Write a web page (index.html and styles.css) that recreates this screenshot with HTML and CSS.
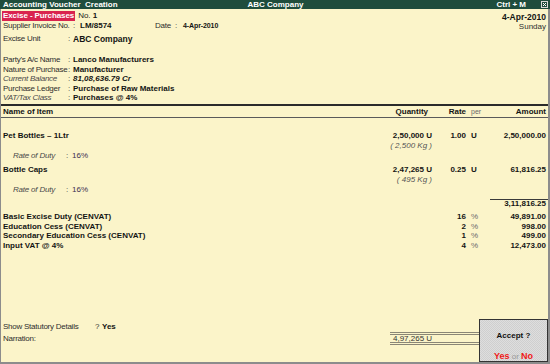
FILE: index.html
```html
<!DOCTYPE html>
<html>
<head>
<meta charset="utf-8">
<link rel="stylesheet" href="styles.css">
</head>
<body>
<div class="window">
  <div class="titlebar">
    <span class="tb-left">Accounting Voucher&nbsp; Creation</span>
    <span class="tb-center">ABC Company</span>
    <span class="tb-right">Ctrl + M<svg class="closebox" width="7" height="7" viewBox="0 0 7 7"><rect x="0.5" y="0.5" width="6" height="6" fill="none" stroke="#d8d8d8" stroke-width="1"/><path d="M2 2 L5 5 M5 2 L2 5" stroke="#ffffff" stroke-width="1"/></svg></span>
  </div>
  <div class="main">
    <div class="top">
      <div class="top-left">
        <div class="hrow r1"><span class="vtype">Excise - Purchases</span><span class="no">No. <b>1</b></span></div>
        <div class="hrow r2"><span class="lbl w70">Supplier Invoice No.</span><span class="colon c7">:</span><b class="v75">LM/8574</b><span class="lbl w20">Date</span><span class="colon c8">:</span><b class="smalldate">4-Apr-2010</b></div>
        <div class="hrow r3"><span class="lbl w64">Excise Unit</span><span class="colon">:</span><b class="big">ABC Company</b></div>
      </div>
      <div class="top-right">
        <b class="rdate">4-Apr-2010</b>
        <div class="day">Sunday</div>
      </div>
    </div>

    <div class="party">
      <div class="prow"><span class="lbl w64">Party's A/c Name</span><span class="colon">:</span><b>Lanco Manufacturers</b></div>
      <div class="prow"><span class="lbl w64">Nature of Purchase</span><span class="colon">:</span><b>Manufacturer</b></div>
      <div class="prow"><span class="lbl w64 it">Current Balance</span><span class="colon">:</span><b class="it">81,08,636.79 Cr</b></div>
      <div class="prow"><span class="lbl w64">Purchase Ledger</span><span class="colon">:</span><b>Purchase of Raw Materials</b></div>
      <div class="prow"><span class="lbl w64 it">VAT/Tax Class</span><span class="colon">:</span><b>Purchases @ 4%</b></div>
    </div>

    <div class="thead trow">
      <span class="c-name b">Name of Item</span>
      <span class="c-qty b hq">Quantity</span>
      <span class="c-rate b">Rate</span>
      <span class="c-per per-h">per</span>
      <span class="c-amt b">Amount</span>
    </div>

    <div class="item first">
      <div class="trow"><span class="c-name b">Pet Bottles – 1Ltr</span><span class="c-qty b">2,50,000 U</span><span class="c-rate b">1.00</span><span class="c-per b">U</span><span class="c-amt b">2,50,000.00</span></div>
      <div class="trow"><span class="c-name"></span><span class="c-qty alt">( 2,500 Kg )</span><span class="c-rate"></span><span class="c-per"></span><span class="c-amt"></span></div>
      <div class="trow"><span class="c-name duty"><i class="dl">Rate of Duty</i><span class="dc">:</span><span class="dv">16%</span></span></div>
    </div>
    <div class="item">
      <div class="trow"><span class="c-name b">Bottle Caps</span><span class="c-qty b">2,47,265 U</span><span class="c-rate b">0.25</span><span class="c-per b">U</span><span class="c-amt b">61,816.25</span></div>
      <div class="trow"><span class="c-name"></span><span class="c-qty alt">( 495 Kg )</span><span class="c-rate"></span><span class="c-per"></span><span class="c-amt"></span></div>
      <div class="trow"><span class="c-name duty"><i class="dl">Rate of Duty</i><span class="dc">:</span><span class="dv">16%</span></span></div>
    </div>

    <div class="trow subtotal"><span class="c-name"></span><span class="c-qty"></span><span class="c-rate"></span><span class="c-per"></span><span class="c-amt b">3,11,816.25</span></div>

    <div class="taxes">
      <div class="trow"><span class="c-name b">Basic Excise Duty (CENVAT)</span><span class="c-qty"></span><span class="c-rate b">16</span><span class="c-per pct">%</span><span class="c-amt b">49,891.00</span></div>
      <div class="trow"><span class="c-name b">Education Cess (CENVAT)</span><span class="c-qty"></span><span class="c-rate b">2</span><span class="c-per pct">%</span><span class="c-amt b">998.00</span></div>
      <div class="trow"><span class="c-name b">Secondary Education Cess (CENVAT)</span><span class="c-qty"></span><span class="c-rate b">1</span><span class="c-per pct">%</span><span class="c-amt b">499.00</span></div>
      <div class="trow"><span class="c-name b">Input VAT @ 4%</span><span class="c-qty"></span><span class="c-rate b">4</span><span class="c-per pct">%</span><span class="c-amt b">12,473.00</span></div>
    </div>

    <div class="footer">
      <div class="frow"><span class="lbl w92">Show Statutory Details</span><span class="q">?</span><b>Yes</b></div>
      <div class="frow narr"><span class="lbl w387">Narration:</span><span class="qtytotal">4,97,265 U</span></div>
    </div>
  </div>

  <div class="accept">
    <div class="acc-title">Accept ?</div>
    <div class="acc-yn"><span class="yn">Yes</span> <span class="or">or</span> <span class="yn">No</span></div>
  </div>
</div>
</body>
</html>
```

FILE: styles.css
```css
* { box-sizing: border-box; }

body {
  margin: 0;
  font-family: "Liberation Sans", Arial, sans-serif;
  font-size: 8px;
  color: #1c1c1c;
  background: #fbf4c9;
}

.window {
  position: relative;
  width: 550px;
  height: 364px;
  background: #fbf4c9;
  overflow: hidden;
  display: flex;
  flex-direction: column;
}

.titlebar {
  height: 9px;
  line-height: 9px;
  background: #1f4d3d;
  color: #ffffff;
  font-weight: bold;
  font-size: 8px;
  display: grid;
  grid-template-columns: 1fr auto 1fr;
  padding: 0 2px 0 3px;
  white-space: nowrap;
}

.tb-center { text-align: center; }

.tb-right {
  display: flex;
  justify-content: flex-end;
  align-items: center;
  gap: 15px;
}

.closebox { display: block; }

.main {
  flex: 1;
  display: flex;
  flex-direction: column;
  border-left: 1px solid #8c8c8c;
  border-right: 2px solid #8c8c8c;
  border-bottom: 2px solid #8c8c8c;
  padding: 2px 2px 17px 2px;
  white-space: nowrap;
}

b, .b { font-weight: bold; color: #141414; }
.it { font-style: italic; }

.lbl { display: inline-block; color: #2e2e2e; letter-spacing: -0.25px; overflow: hidden; }
.lbl.it { color: #4a4a4a; }
.w64 { width: 65px; }
.w70 { width: 70px; }
.w20 { width: 20px; }
.w92 { width: 92px; }
.w387 { width: 387px; }

.colon { display: inline-block; width: 5px; color: #444; }
.c7 { width: 7px; }
.c8 { width: 8px; }
.v75 { display: inline-block; width: 75px; }

.top {
  display: flex;
  justify-content: space-between;
}

.hrow { height: 10px; line-height: 10px; display: flex; align-items: center; }
.r3 { margin-top: 3px; }

.vtype {
  display: inline-block;
  margin-left: -1px;
  height: 10px;
  line-height: 10px;
  padding: 0 1px;
  background: #d9244f;
  color: #ffffff;
  font-weight: bold;
  letter-spacing: -0.1px;
}

.no { margin-left: 3px; }

.smalldate { font-size: 7px; letter-spacing: -0.1px; }
.big { font-size: 8.5px; }

.top-right {
  text-align: right;
  line-height: 10px;
  padding-top: 1px;
}
.rdate { display: block; font-size: 8.5px; }
.day { color: #2e2e2e; }

.party {
  margin-top: 11px;
}
.prow { height: 9.5px; line-height: 9.5px; display: flex; }

.trow {
  display: flex;
  height: 10px;
  line-height: 10px;
}
.c-name { flex: 1; }
.c-qty { width: 60px; text-align: right; }
.c-rate { width: 34px; text-align: right; }
.c-per { width: 24px; padding-left: 5px; }
.c-amt { width: 56px; text-align: right; }

.thead {
  margin-top: 1.5px;
  height: 14px;
  line-height: 11px;
  border-top: 2px solid #2a2a2a;
  border-bottom: 1px solid #5a5a5a;
  margin-left: -2px;
  margin-right: -2px;
  padding: 0 2px;
}
.hq { padding-right: 4px; }
.per-h { color: #6a6a6a; font-size: 7px; }

.item { margin-top: 4px; }
.item.first { margin-top: 13px; }

.alt { font-style: italic; color: #555; }

.duty { padding-left: 10px; }
.dl { color: #4a4a4a; display: inline-block; width: 53px; letter-spacing: -0.2px; }
.dc { display: inline-block; width: 6px; color: #444; }
.dv { color: #3a3050; }

.subtotal {
  margin-top: 4px;
  height: 9px;
  line-height: 8px;
}
.subtotal .c-amt { border-top: 1px solid #3a3a3a; margin-right: -2px; padding-right: 2px; width: 58px; }

.taxes { margin-top: 4px; }
.taxes .trow { height: 9.5px; line-height: 9.5px; }
.pct { color: #6a6a6a; }

.footer { margin-top: auto; }
.frow { display: flex; height: 10px; line-height: 10px; }
.q { display: inline-block; width: 7px; color: #333; }
.narr { height: 13px; line-height: 13px; align-items: center; }

.qtytotal {
  display: block;
  width: 100px;
  height: 13px;
  line-height: 7px;
  border-top: 3px double #8a8676;
  border-bottom: 3px double #8a8676;
  padding-left: 3px;
  color: #333;
}

.accept {
  position: absolute;
  left: 479px;
  top: 319px;
  width: 69px;
  height: 43px;
  border: 1px solid #333333;
  background: repeating-conic-gradient(#dedede 0 25%, #cfcfcf 0 50%) 0 0 / 2px 2px;
  text-align: center;
  padding-top: 11px;
}
.acc-title { font-weight: bold; line-height: 10px; color: #111; }
.acc-yn { margin-top: 11px; line-height: 9px; }
.yn { color: #f01818; font-weight: bold; font-size: 9px; }
.or { color: #999; }
```
